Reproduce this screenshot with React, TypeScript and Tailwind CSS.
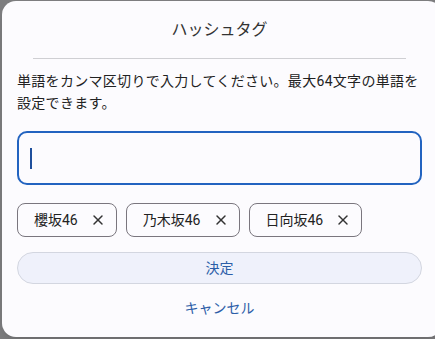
import { X } from "lucide-react"

const tags = ["櫻坂46", "乃木坂46", "日向坂46"]

export default function App() {
  return (
    <div
      className="min-h-screen overflow-hidden bg-[#7d7d7f] pl-[2px] pt-[1px]"
      style={{ fontFamily: 'Roboto, "Noto Sans CJK JP", sans-serif' }}
    >
      <div className="h-[336px] w-[440px] rounded-[14px] bg-[#fcfbfe] pl-[15px] pr-[20px] shadow-lg">
        <div className="pt-[17px] text-center text-[16px] leading-6 text-[#333]">ハッシュタグ</div>
        <div className="mx-[16px] mt-[16px] h-px bg-[#cfcfd3]" />
        <p className="mt-[11px] text-[14px] leading-[22px] tracking-[0.3px] text-[#222]">
          単語をカンマ区切りで入力してください。最大64文字の単語を
          <br />
          設定できます。
        </p>
        <div className="mt-[17px] flex h-[54px] w-[405px] items-center rounded-[10px] border-2 border-[#2263c0] bg-[#fcfbfe] px-[11px]">
          <div className="h-[21px] w-[2px] bg-[#1f4f9c]" />
        </div>
        <div className="mt-[18px] flex gap-[9px]">
          {tags.map((t) => (
            <div
              key={t}
              className="flex h-[34px] items-center gap-[12px] rounded-[8px] border border-[#7a767e] pl-[16px] pr-[10px] text-[14px] text-[#222]"
            >
              <span>{t}</span>
              <X size={16} strokeWidth={2.2} className="text-[#333]" />
            </div>
          ))}
        </div>
        <button className="mt-[15px] flex h-[32px] w-[405px] items-center justify-center rounded-full border border-[#d3d6e0] bg-[#eff1fb] text-[14px] text-[#2c5ea8]">
          決定
        </button>
        <div className="mt-[14px] text-center text-[14px] leading-5 text-[#2c5ea8]">キャンセル</div>
      </div>
    </div>
  )
}
